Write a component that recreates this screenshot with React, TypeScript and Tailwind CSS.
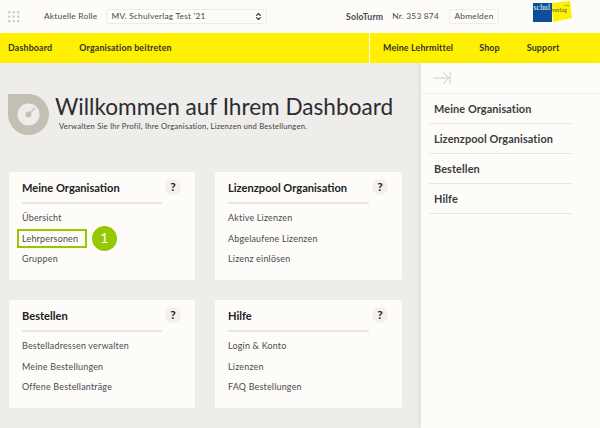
import React from 'react';
import { ChevronsUpDown } from 'lucide-react';

const cards = [
  { title: 'Meine Organisation', links: ['Übersicht', 'Lehrpersonen', 'Gruppen'] },
  { title: 'Lizenzpool Organisation', links: ['Aktive Lizenzen', 'Abgelaufene Lizenzen', 'Lizenz einlösen'] },
  { title: 'Bestellen', links: ['Bestelladressen verwalten', 'Meine Bestellungen', 'Offene Bestellanträge'] },
  { title: 'Hilfe', links: ['Login & Konto', 'Lizenzen', 'FAQ Bestellungen'] },
];

const sideLinks = ['Meine Organisation', 'Lizenzpool Organisation', 'Bestellen', 'Hilfe'];

const Card = ({ title, links }: { title: string; links: string[] }) => (
  <div className="h-[108px] rounded-[2px] bg-[#fdfcf9] px-[13px] pt-[3px]">
    <div className="flex h-[25px] items-center justify-between">
      <h2 className="text-[11.1px] font-bold leading-none text-[#222]">{title}</h2>
      <span className="mr-[1px] mt-[-2px] flex h-[16px] w-[16px] items-center justify-center rounded-full bg-[#f4f1ea] text-[12px] font-bold text-[#222]">?</span>
    </div>
    <div className="mr-[20px] mt-[2px] h-[2px] bg-[#e9e7df]" />
    <ul className="mt-[7px] flex flex-col gap-[6.5px] text-[8.95px] leading-[14px] tracking-[0.2px] text-[#4a4a50]">
      {links.map((link) => (
        <li key={link} className="relative">
          {link}
          {link === 'Lehrpersonen' && (
            <>
              <span className="absolute left-[-5px] top-[-3px] h-[19px] w-[70px] border-[2px] border-[#94c800]" />
              <span className="absolute left-[70px] top-[-6px] flex h-[25px] w-[25px] items-center justify-center rounded-full bg-[#94c800] text-[14px] text-white">1</span>
            </>
          )}
        </li>
      ))}
    </ul>
  </div>
);

export default function App() {
  return (
    <div className="flex h-[428px] w-[600px] flex-col overflow-hidden bg-[#eeede9] font-['Lato',sans-serif]">
      {/* Top bar */}
      <div className="flex h-[33px] items-center bg-[#fdfcf9] text-[8.4px] tracking-[0.2px] text-[#4a4a50]">
        <svg width="12" height="12" viewBox="0 0 12 12" className="ml-[8px]" fill="#d2d0c9">
          {[0, 4.5, 9].flatMap((y) =>
            [0, 4.5, 9].map((x) => <rect key={`${x}-${y}`} x={x} y={y} width="2.4" height="2.4" />)
          )}
        </svg>
        <span className="ml-[24px]">Aktuelle Rolle</span>
        <div className="ml-[9px] flex h-[15px] w-[161px] items-center justify-between rounded-[2px] border border-[#eeece6] pl-[4px] pr-[3px]">
          <span>MV. Schulverlag Test '21</span>
          <ChevronsUpDown size={9} strokeWidth={3} className="text-[#333]" />
        </div>
        <div className="ml-auto flex items-center pr-[28px]">
          <span className="text-[8.7px] font-bold">SoloTurm</span>
          <span className="ml-[9px]">Nr. 353 874</span>
          <span className="ml-[10px] flex h-[15px] w-[50px] items-center justify-center rounded-[2px] border border-[#eeece6]">Abmelden</span>
          <svg width="39" height="21" viewBox="0 0 39 21" className="ml-[34px] mt-[-10px]">
            <rect x="0" y="2" width="19" height="19" fill="#0b4f94" />
            <polygon points="19,2 37,0 39,17 20,21" fill="#fff000" />
            <text x="0.5" y="9" fontSize="7.5" fill="#fff" fontFamily="Liberation Serif, serif">schul</text>
            <text x="19" y="11" fontSize="5.5" fill="#333" fontFamily="Liberation Serif, serif">verlag</text>
            <text x="31" y="5" fontSize="2.5" fill="#333" fontFamily="Liberation Sans, sans-serif">plus</text>
          </svg>
        </div>
      </div>

      {/* Yellow nav */}
      <nav className="flex h-[30px] items-center bg-[#fff000] text-[8.9px] font-bold tracking-[0.15px] text-[#333]">
        <span className="ml-[8px]">Dashboard</span>
        <span className="ml-[27px]">Organisation beitreten</span>
        <div className="ml-auto flex h-full w-[231px] items-center border-l border-[#fdfcf9] pl-[13px]">
          <span>Meine Lehrmittel</span>
          <span className="ml-[26px]">Shop</span>
          <span className="ml-[27px]">Support</span>
        </div>
      </nav>

      <div className="flex min-h-0 flex-1">
        {/* Main */}
        <main className="w-[421px] shrink-0 pl-[9px] pr-[19px]">
          <div className="mt-[30px] flex h-[49px]">
            <svg width="41" height="41" viewBox="0 0 41 41" className="ml-[-1px] mt-[1px] shrink-0">
              <path d="M0 0H20.5A20.5 20.5 0 1 1 0 20.5Z" fill="#c2bfb3" />
              <circle cx="20.5" cy="20.5" r="11" fill="#eeede9" />
              <circle cx="20.5" cy="20.5" r="3" fill="#c2bfb3" />
              <path d="M20.5 20.5L27 14" stroke="#c2bfb3" strokeWidth="1.3" />
            </svg>
            <div className="ml-[6px]">
              <h1 className="whitespace-nowrap text-[22.6px] font-normal leading-[27px] text-[#2b2b33]">Willkommen auf Ihrem Dashboard</h1>
              <p className="ml-[4px] mt-[1px] whitespace-nowrap text-[7.7px] leading-[11px] tracking-[0.2px] text-[#3d3d45]">Verwalten Sie Ihr Profil, Ihre Organisation, Lizenzen und Bestellungen.</p>
            </div>
          </div>
          <div className="mt-[30px] grid grid-cols-[186px_187px] gap-x-[20px] gap-y-[20px]">
            {cards.map((card) => (
              <Card key={card.title} {...card} />
            ))}
          </div>
        </main>

        {/* Right panel */}
        <aside className="flex-1 bg-[#fdfcf9] shadow-[-2px_0_4px_rgba(0,0,0,0.06)]">
          <div className="flex h-[31px] items-center border-b border-[#f0eee8] pl-[12px]">
            <svg width="18" height="14" viewBox="0 0 18 14" fill="none" stroke="#c9c7c1" strokeWidth="0.9">
              <path d="M0 7H16M10 1L16 7L10 13M17 0.5V13.5" />
            </svg>
          </div>
          <ul className="ml-[8px] mr-[28px]">
            {sideLinks.map((link) => (
              <li key={link} className="flex h-[30px] items-center border-b border-[#e9e7df] pl-[5px] pt-[2px] text-[10.9px] font-bold tracking-[0.1px] text-[#3a3a40]">
                {link}
              </li>
            ))}
          </ul>
        </aside>
      </div>
    </div>
  );
}
